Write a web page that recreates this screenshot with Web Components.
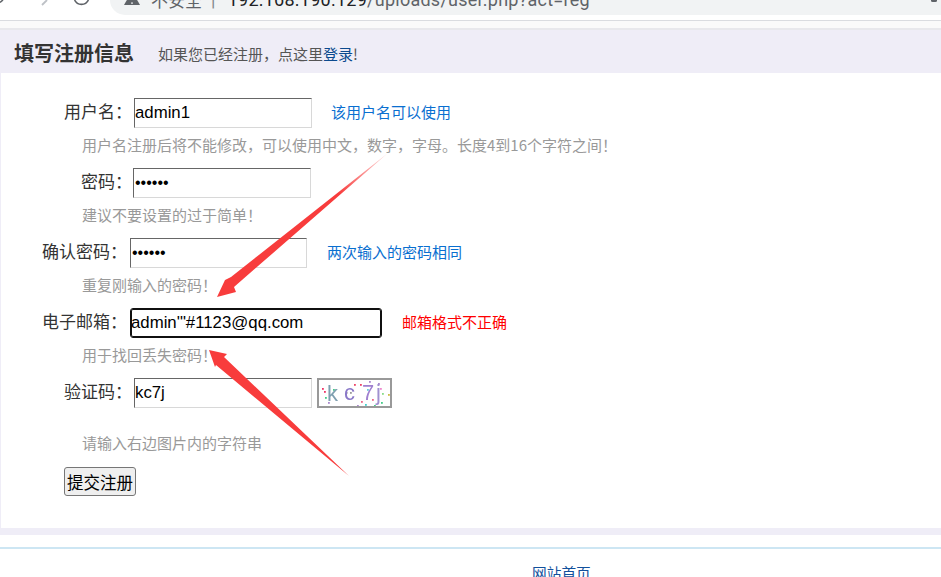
<!DOCTYPE html>
<html lang="zh-CN">
<head>
<meta charset="utf-8">
<title>填写注册信息</title>
<style>
  html, body { margin: 0; height: 577px; overflow: hidden; background: #fff; }
  body { position: relative; font-family: "Liberation Sans", "Noto Sans CJK SC", sans-serif; }
</style>
</head>
<body>
<browser-bar url="192.168.190.129/uploads/user.php?act=reg"></browser-bar>
<reg-panel>
  <reg-field indent="63" gap="2" label="用户名：" value="admin1" width="178" status="该用户名可以使用" status-gap="19"
    hint="用户名注册后将不能修改，可以使用中文，数字，字母。长度4到16个字符之间！"></reg-field>
  <reg-field indent="80" gap="1" label="密码：" type="password" value="123456" width="178"
    hint="建议不要设置的过于简单！"></reg-field>
  <reg-field indent="41" gap="3" label="确认密码：" type="password" value="123456" width="177" status="两次输入的密码相同" status-gap="20"
    hint="重复刚输入的密码！"></reg-field>
  <reg-field indent="41" gap="3" label="电子邮箱：" value="admin'&quot;#1123@qq.com" width="252" focused status="邮箱格式不正确" status-kind="error" status-gap="20"
    hint="用于找回丢失密码！"></reg-field>
  <reg-field indent="63" gap="2" label="验证码：" value="kc7j" width="178" captcha hint-top="25"
    hint="请输入右边图片内的字符串"></reg-field>
  <reg-submit>提交注册</reg-submit>
</reg-panel>
<reg-footer><a href="#">网站首页</a></reg-footer>
<arrow-overlay></arrow-overlay>

<template id="browser-bar-template">
  <style>
    :host { display: flex; height: 15px; background: #fff; overflow: hidden; align-items: flex-end; color: #5f6368; }
    .nav { flex: 0 0 110px; height: 15px; }
    .nav svg { display: block; }
    .address {
      flex: 1; height: 15px; box-sizing: border-box; background: #f1f3f4; border-radius: 0 0 0 15px;
      display: flex; align-items: flex-start; padding-left: 14px; position: relative;
    }
    .address svg { flex: none; }
    .line { display: flex; align-items: center; height: 24px; margin-top: -13px; white-space: nowrap; font: 18px "Roboto", "Noto Sans CJK SC", sans-serif; letter-spacing: .25px; }
    .warn { margin-left: 11px; font-size: 17px; letter-spacing: 0; }
    .sep { margin: 0 12px 0 9px; color: #80868b; }
    .url { color: #202124; }
    .url span { color: #5f6368; }
    .dot { position: absolute; right: 4px; top: -1px; width: 6px; height: 3px; border-radius: 3px; background: #5f6368; }
  </style>
  <div class="nav">
    <svg width="110" height="15" viewBox="0 0 110 15" fill="none">
      <path d="M0 2.5 L3 0" stroke="#5f6368" stroke-width="1.6"/>
      <path d="M47 0 L42 5" stroke="#bdc1c6" stroke-width="1.8"/>
      <path d="M88.4 0 A7.6 7.6 0 0 1 74.6 0" stroke="#5f6368" stroke-width="1.6"/>
    </svg>
  </div>
  <div class="address">
    <svg width="16" height="6" viewBox="0 0 16 6"><path d="M8 -9 L16 5 H0 Z" fill="#5f6368"/><rect x="7.2" y="2.4" width="1.6" height="1.4" fill="#f1f3f4"/></svg>
    <div class="line"><span class="warn">不安全</span><span class="sep">|</span><span class="url"></span></div>
    <div class="dot"></div>
  </div>
</template>

<template id="reg-panel-template">
  <style>
    :host { display: block; margin-top: 5px; border-top: 1px solid #dadce0; background: #fafafa; padding-top: 7px; }
    .head {
      height: 45px; box-sizing: border-box; border-top: 2px solid #e8e8ec; background: #efedf7;
      display: flex; align-items: center; padding: 1px 0 0 14px;
    }
    h2 { margin: 0; font: bold 20px "Noto Sans CJK SC", sans-serif; color: #333; }
    p { margin: 0 0 0 24px; font: 15px "Noto Sans CJK SC", sans-serif; color: #555; padding-top: 2px; }
    a { color: #0b4a8e; text-decoration: none; }
    .body {
      background: #fff; border-left: 1px solid #efedf7; border-bottom: 7px solid #efedf7;
      padding-top: 25px; box-sizing: border-box; height: 462px;
    }
  </style>
  <div class="head"><h2>填写注册信息</h2><p>如果您已经注册，点这里<a href="#">登录</a>!</p></div>
  <div class="body"><slot></slot></div>
</template>

<template id="reg-field-template">
  <style>
    :host { display: block; font-family: "Noto Sans CJK SC", sans-serif; }
    .row { display: flex; align-items: center; height: 30px; }
    label { font-size: 17px; color: #333; white-space: nowrap; line-height: 30px; margin-top: -4px; }
    input {
      box-sizing: border-box; height: 30px; padding: 0; margin: 0; background: #fff; color: #000; outline: none;
      font: 16.8px "Liberation Sans", sans-serif;
      border: 1px solid; border-color: #666 #d8d8d8 #d8d8d8 #666;
    }
    input[type="password"] { font-size: 16px; padding-left: 1px; }
    input.focused { border-color: #101010; border-radius: 3px; box-shadow: inset 0 0 0 1px #101010; }
    .status { font-size: 15px; color: #0a6fd0; white-space: nowrap; margin-top: -3px; }
    .status.error { color: #f00; }
    .hint { font-size: 15px; color: #999; height: 40px; line-height: 33px; padding-left: 81px; white-space: nowrap; }
  </style>
  <div class="row"><label></label><input><span class="status"></span></div>
  <div class="hint"></div>
</template>

<template id="reg-submit-template">
  <style>
    :host { display: block; padding: 0 0 0 63px; margin-top: -17px; }
    button {
      box-sizing: border-box; width: 72px; height: 29px; padding: 0; margin: 0;
      background: #efefef; border: 1px solid #767676; border-radius: 3px; color: #000;
      font: 16.5px "Noto Sans CJK SC", sans-serif;
    }
  </style>
  <button type="button"><slot></slot></button>
</template>

<template id="reg-footer-template">
  <style>
    :host { display: block; margin-top: 12px; border-top: 2px solid #cde6f3; padding: 13px 0 0 532px; font: 14.7px "Noto Sans CJK SC", sans-serif; white-space: nowrap; }
    ::slotted(a) { color: #12509c; text-decoration: none; }
  </style>
  <slot></slot>
</template>

<template id="arrow-overlay-template">
  <style>
    :host { position: absolute; left: 0; top: 0; width: 941px; height: 577px; pointer-events: none; }
    svg { display: block; }
  </style>
  <svg width="941" height="577" viewBox="0 0 941 577">
    <defs>
      <linearGradient id="a1" gradientUnits="userSpaceOnUse" x1="388" y1="153" x2="340" y2="195">
        <stop offset="0" stop-color="#f83c3c" stop-opacity=".15"/><stop offset="1" stop-color="#f83c3c"/>
      </linearGradient>
    </defs>
    <polygon fill="url(#a1)" points="388,153 231,277 225,280 217,297 236,292 234,287"/>
    <polygon fill="#f83c3c" points="209,350 227,354 224,357 349,476 216,365 215,367"/>
  </svg>
</template>

<script>
  function fromTemplate(el, id) {
    const root = el.attachShadow({ mode: 'open' });
    root.appendChild(document.getElementById(id).content.cloneNode(true));
    return root;
  }

  class BrowserBar extends HTMLElement {
    constructor() {
      super();
      const root = fromTemplate(this, 'browser-bar-template');
      const url = this.getAttribute('url');
      const cut = url.indexOf('/');
      root.querySelector('.url').innerHTML = url.slice(0, cut) + '<span>' + url.slice(cut) + '</span>';
    }
  }

  class RegPanel extends HTMLElement {
    constructor() {
      super();
      fromTemplate(this, 'reg-panel-template');
    }
  }

  class RegField extends HTMLElement {
    constructor() {
      super();
      const root = fromTemplate(this, 'reg-field-template');
      const row = root.querySelector('.row');
      row.style.paddingLeft = this.getAttribute('indent') + 'px';

      const label = root.querySelector('label');
      label.textContent = this.getAttribute('label');
      label.style.marginRight = this.getAttribute('gap') + 'px';

      const input = root.querySelector('input');
      input.type = this.getAttribute('type') || 'text';
      input.setAttribute('value', this.getAttribute('value'));
      input.style.width = this.getAttribute('width') + 'px';
      if (this.hasAttribute('focused')) input.classList.add('focused');

      const status = root.querySelector('.status');
      if (this.hasAttribute('status')) {
        status.textContent = this.getAttribute('status');
        status.style.marginLeft = this.getAttribute('status-gap') + 'px';
        if (this.getAttribute('status-kind') === 'error') status.classList.add('error');
      }

      if (this.hasAttribute('captcha')) {
        status.replaceWith(document.createElement('captcha-image'));
      }

      const hint = root.querySelector('.hint');
      hint.textContent = this.getAttribute('hint');
      if (this.hasAttribute('hint-top')) {
        hint.style.paddingTop = this.getAttribute('hint-top') - 7 + 'px';
        hint.style.height = '58px';
      }
    }
  }

  class CaptchaImage extends HTMLElement {
    constructor() {
      super();
      const root = this.attachShadow({ mode: 'open' });
      // scattered noise dots, same spots as the picture
      const dots = [[3,8,'#e36'],[5,11,'#e36'],[9,22,'#a8c'],[12,26,'#4bb'],[6,17,'#4c8'],[27,12,'#bbb'],[31,12,'#999'],
        [35,4,'#e46'],[41,4,'#e46'],[50,1,'#a8c'],[42,21,'#e68'],[38,25,'#a8c'],[55,25,'#4c8'],[59,3,'#a8c'],
        [62,22,'#4c8'],[69,14,'#cb4'],[63,13,'#8d8'],[53,19,'#e68'],[46,24,'#4cc'],[61,8,'#e8c'],[48,9,'#6cd'],[14,9,'#4c8']];
      const rects = dots.map(d => `<rect x="${d[0]}" y="${d[1]}" width="1.8" height="1.8" fill="${d[2]}"/>`).join('');
      root.innerHTML = `
        <style>
          :host { display: block; margin-left: 5px; width: 75px; height: 30px; box-sizing: border-box; border: 2px solid #999; background: #fff; overflow: hidden; }
          svg { display: block; filter: blur(.4px); }
          text { font: 22px "Liberation Sans", sans-serif; }
        </style>
        <svg width="71" height="26" viewBox="0 0 71 26">
          ${rects}
          <text x="8" y="21" fill="#7f9fb0">k</text>
          <text x="25" y="20" fill="#8a78c8">c</text>
          <text x="43" y="20" fill="#a080d0">7</text>
          <text x="57" y="20" fill="#a090d0">j</text>
        </svg>`;
    }
  }

  class RegSubmit extends HTMLElement {
    constructor() {
      super();
      fromTemplate(this, 'reg-submit-template');
    }
  }

  class RegFooter extends HTMLElement {
    constructor() {
      super();
      fromTemplate(this, 'reg-footer-template');
    }
  }

  class ArrowOverlay extends HTMLElement {
    constructor() {
      super();
      fromTemplate(this, 'arrow-overlay-template');
    }
  }

  customElements.define('captcha-image', CaptchaImage);
  customElements.define('browser-bar', BrowserBar);
  customElements.define('reg-panel', RegPanel);
  customElements.define('reg-field', RegField);
  customElements.define('reg-submit', RegSubmit);
  customElements.define('reg-footer', RegFooter);
  customElements.define('arrow-overlay', ArrowOverlay);
</script>
</body>
</html>
